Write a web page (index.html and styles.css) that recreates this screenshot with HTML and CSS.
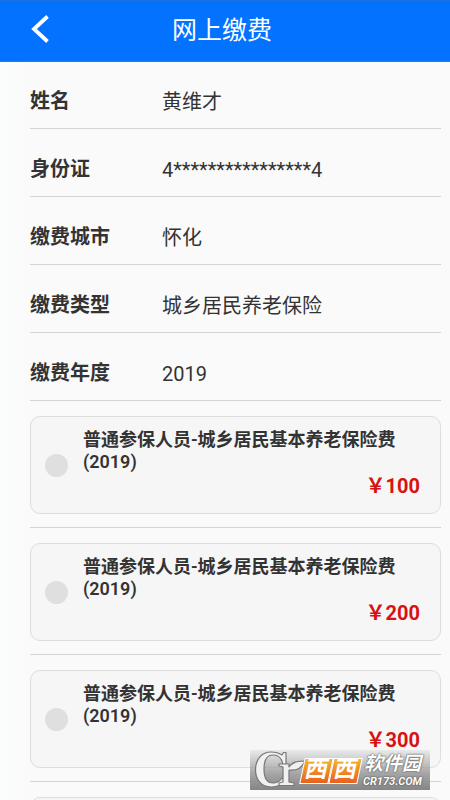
FILE: index.html
```html
<!DOCTYPE html>
<html lang="zh-CN">
<head>
<meta charset="utf-8">
<meta name="viewport" content="width=device-width, initial-scale=1">
<title>网上缴费</title>
<link rel="stylesheet" href="styles.css">
</head>
<body>
<header class="topbar">
  <button class="back" type="button" aria-label="返回">
    <svg width="18" height="28" viewBox="0 0 18 28" fill="none" stroke="currentColor" stroke-width="3.8"><path d="M16.500 1.500 3 14l13.500 12.500"/></svg>
  </button>
  <h1 class="title">网上缴费</h1>
</header>
<main class="content">
  <dl class="info">
    <div class="row"><dt>姓名</dt><dd>黄维才</dd></div>
    <div class="row"><dt>身份证</dt><dd>4****************4</dd></div>
    <div class="row"><dt>缴费城市</dt><dd>怀化</dd></div>
    <div class="row"><dt>缴费类型</dt><dd>城乡居民养老保险</dd></div>
    <div class="row"><dt>缴费年度</dt><dd>2019</dd></div>
  </dl>
  <div class="plans">
    <div class="plan"><label class="card"><input type="radio" name="plan"><span class="name">普通参保人员-城乡居民基本养老保险费(2019)</span><span class="price">￥100</span></label></div>
    <div class="plan"><label class="card"><input type="radio" name="plan"><span class="name">普通参保人员-城乡居民基本养老保险费(2019)</span><span class="price">￥200</span></label></div>
    <div class="plan"><label class="card"><input type="radio" name="plan"><span class="name">普通参保人员-城乡居民基本养老保险费(2019)</span><span class="price">￥300</span></label></div>
    <div class="plan"><label class="card"><input type="radio" name="plan"></label></div>
  </div>
</main>
<div class="watermark">
  <svg class="mark" width="56" height="40" viewBox="0 0 56 40" fill="#f0f0f0" stroke="#777" stroke-width="1.2" stroke-linejoin="round">
    <path d="M36 2.500V15H33C32 8 28 5 23 5 16 5 14 11 14 19c0 9 3 14 9 14 4 0 7-2 9-5l3 2c-3 5-7 7-14 7C11 37 5.500 29 5.500 20 5.500 9 12 2 21 2c5 0 8 1 11 3l1.500-2.500Z"/>
    <path d="M29 14H39V17C42 12 47 11 55 11 52 18 46 21 39 20V32L44 33V35.500H29V33L33 32V17L29 16Z"/>
  </svg>
  <div class="tiles"><span>西</span><span>西</span></div>
  <div class="brand"><span class="brand-name">软件园</span><span class="brand-site">CR173.COM</span></div>
</div>
</body>
</html>
```
FILE: styles.css
```css
* { box-sizing: border-box; }

body {
  margin: 0;
  min-height: 100vh;
  background: linear-gradient(90deg, #fafdfc, #fafafa 30px);
  color: #333;
  font-family: Roboto, "Noto Sans CJK SC", sans-serif;
  overflow-x: hidden;
}

body::-webkit-scrollbar { display: none; }

.topbar {
  display: grid;
  grid-template-columns: 80px 1fr 80px;
  align-items: center;
  height: 61px;
  padding-bottom: 4px;
  background: #0272ff;
  border-top: 1px solid #1b73de;
  box-shadow: 0 1px #2a7dd6;
  color: #fff;
}

.back {
  display: flex;
  padding: 0 0 0 31px;
  border: 0;
  background: none;
  color: inherit;
}

.title {
  margin: 0;
  padding: 4px 6px 0 0;
  font-size: 25px;
  line-height: 36px;
  font-weight: 400;
  text-align: center;
}

.content { padding: 0 9px 0 30px; }

.info { margin: 0; }

.row {
  display: grid;
  grid-template-columns: 132px 1fr;
  height: 68px;
  padding-top: 25px;
  border-bottom: 1px solid #d4d4d4;
  font-size: 20px;
  line-height: 30px;
}

.row dt { font-weight: 700; }
.row dd { margin: 0; padding-top: 1px; }

.plan {
  padding: 15px 0 13px;
  border-bottom: 1px solid #d4d4d4;
}

.card {
  display: grid;
  grid-template-columns: 23px 1fr;
  grid-template-rows: 45px 1fr;
  column-gap: 15px;
  height: 98px;
  padding: 12px 20px 12px 14px;
  border: 1px solid #ddd;
  border-radius: 10px;
  background: #f6f6f6;
}

.card input {
  appearance: none;
  grid-row: 1 / 3;
  align-self: center;
  width: 23px;
  height: 23px;
  margin: 0;
  border-radius: 50%;
  background: #dfdfdf;
}

.card input:checked { background: #0272ff; }

.name {
  font-size: 18px;
  line-height: 22px;
  font-weight: 600;
}

.price {
  justify-self: end;
  font-size: 20px;
  line-height: 24px;
  font-weight: 700;
  color: #d81212;
}

.watermark {
  position: absolute;
  left: 250px;
  top: 750px;
  display: flex;
  align-items: center;
  width: 180px;
  height: 40px;
  background: linear-gradient(rgba(205, 205, 205, 0.3), rgba(155, 155, 155, 0.9) 60%, #858585);
}

.mark {
  flex: none;
  margin-right: -4px;
}

.tiles { display: flex; }

.tiles span {
  width: 29px;
  height: 26px;
  margin-top: 2px;
  transform: skewX(-12deg);
  background: linear-gradient(#f7b52c, #e9601c);
  border: 1px solid #fff;
  color: #fff;
  font-size: 23px;
  line-height: 22px;
  font-weight: 700;
  text-align: center;
}

.brand {
  display: flex;
  flex-direction: column;
  padding-left: 3px;
  color: #fff;
  font-style: italic;
  font-weight: 700;
  text-shadow: 0 0 1px #555, 0 0 2px #555;
  white-space: nowrap;
}

.brand-name {
  padding-left: 1px;
  font-size: 19px;
  line-height: 22px;
}

.brand-site {
  font-size: 11px;
  line-height: 13px;
}
```
